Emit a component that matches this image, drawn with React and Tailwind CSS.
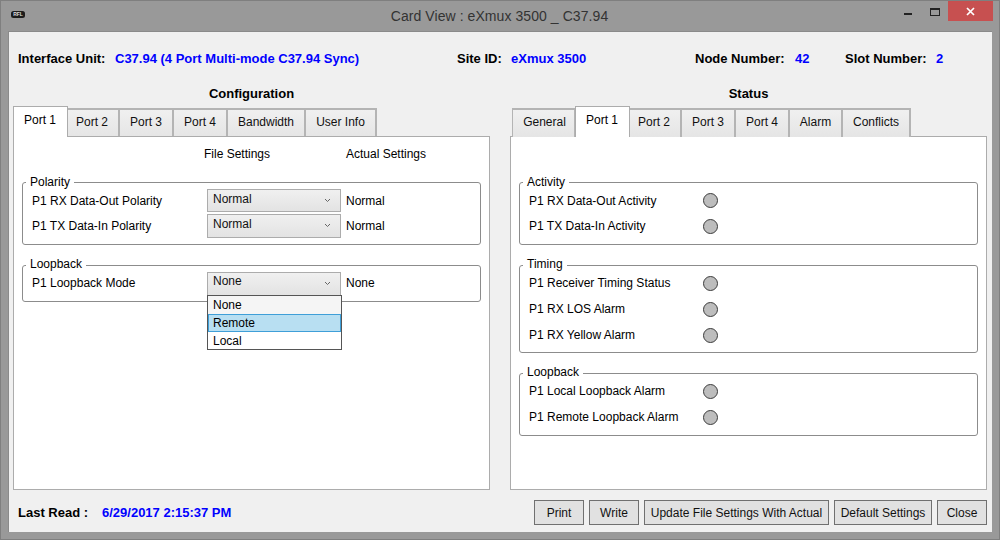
const F = { fontFamily: '"Liberation Sans", Arial, sans-serif' };

function Tab({ label, w, active, extra = "" }) {
  return active ? (
    <div style={{ width: w }} className="relative z-10 -mr-px h-[31px] border border-b-0 border-[#acacac] bg-white flex items-start justify-center pt-[4px] pr-[1px] text-[12px] text-black">
      {label}
    </div>
  ) : (
    <div style={{ width: w }} className={"-mr-px h-[29px] border-2 border-b-0 border-[#b4b4b4] border-l-[1px] bg-gradient-to-b from-[#f0f0f0] to-[#e5e5e5] flex items-center justify-center pb-[4px] text-[12px] text-[#111] " + extra}>
      {label}
    </div>
  );
}

function Tabs({ tabs }) {
  return (
    <div className="flex items-end h-[31px]">
      {tabs.map((t) => (
        <Tab key={t[0]} label={t[0]} w={t[1]} active={t[2]} extra={t[3]} />
      ))}
    </div>
  );
}

function Group({ title, h, mt, children, first }) {
  return (
    <div style={{ height: h, marginTop: mt }} className="relative border border-[#8c8c8c] rounded-[3px] pl-[9px]">
      <span className={first ? "absolute left-[3px] -top-[9px] bg-white px-[4px] text-[12px] leading-[16px] text-black" : "absolute left-[3px] -top-[10px] bg-white px-[4px] text-[12px] leading-[16px] text-black"}>{title}</span>
      {children}
    </div>
  );
}

function Chevron() {
  return (
    <svg width="7" height="5" viewBox="0 0 7 5" className="absolute right-[9px] top-[8px]">
      <path d="M1 1 L3.5 3.5 L6 1" fill="none" stroke="#666" strokeWidth="1" />
    </svg>
  );
}

function Select({ value, h = 24, low }) {
  return (
    <div style={{ height: h }} className={low ? "relative w-[134px] border border-[#acacac] bg-gradient-to-b from-[#f0f0f0] to-[#e3e3e3] pl-[5px] text-[12px] leading-[19px] text-[#111]" : "relative w-[134px] border border-[#acacac] bg-gradient-to-b from-[#f0f0f0] to-[#e3e3e3] pl-[5px] text-[12px] leading-[17px] text-[#111]"}>
      {value}
      <Chevron />
    </div>
  );
}

function CfgRow({ label, value, h, select, low }) {
  const pad = low ? "pt-[1px]" : "pb-[1px]";
  return (
    <div style={{ height: h }} className="flex items-center">
      <span className={"w-[175px] text-[12px] text-black " + pad}>{label}</span>
      <Select value={value} h={select} low={low} />
      <span className={"ml-[5px] text-[12px] text-black " + pad}>{value}</span>
    </div>
  );
}

function Led() {
  return <span className="block w-[15px] h-[15px] rounded-full border border-[#3c3c3c] bg-[#bdbdbd]" />;
}

function StatRow({ label, h = 26, drop }) {
  return (
    <div style={{ height: h }} className="flex items-center">
      <span className={drop ? "w-[174px] text-[12px] text-black pt-[2px]" : "w-[174px] text-[12px] text-black"}>{label}</span>
      <Led />
    </div>
  );
}

function Btn({ label, w }) {
  return (
    <div style={{ width: w }} className="h-[25px] border border-[#707070] bg-[#e1e1e1] flex items-center justify-center text-[12px] text-[#111]">
      {label}
    </div>
  );
}

export default function App() {
  return (
    <div style={F} className="w-[1000px] h-[540px] overflow-hidden bg-[#999999] border border-[#7f7f7f] flex flex-col">
      {/* title bar */}
      <div className="h-[30px] relative flex items-center justify-center shrink-0 pr-[1px]">
        <svg width="14" height="7" viewBox="0 0 14 7" className="absolute left-[10px] top-[10px]">
          <rect x="0" y="0" width="14" height="7" rx="2.5" fill="#1c1c1c" />
          <text x="7" y="5.4" textAnchor="middle" fontSize="5" fontWeight="700" fill="#ddd">RFL</text>
        </svg>
        <span className="text-[14px] tracking-[0.07px] text-[#333] pt-[1px]">Card View : eXmux 3500 _ C37.94</span>
        <div className="absolute right-[6px] top-0 flex items-start">
          <div className="w-[28px] h-[20px] relative">
            <span className="absolute left-[9px] top-[12px] w-[8px] h-[2px] bg-[#222]" />
          </div>
          <div className="w-[17px] h-[20px] relative mr-[8px]">
            <span className="absolute left-[7px] top-[7px] w-[10px] h-[8px] border border-[#222] border-t-2" />
          </div>
          <div className="w-[45px] h-[20px] bg-[#c75050] flex items-center justify-center">
            <svg width="9" height="9" viewBox="0 0 9 9"><path d="M1 1 L8 8 M8 1 L1 8" stroke="#fff" strokeWidth="1.7" /></svg>
          </div>
        </div>
      </div>

      {/* client */}
      <div className="mx-[7px] w-[984px] h-[501px] bg-[#f0f0f0] border border-[#8a8a8a] border-r-0 border-b-0 flex flex-col shrink-0">
        {/* info row */}
        <div className="h-[15px] mt-[19px] flex items-center pl-[9px] text-[13px] font-bold text-black whitespace-nowrap">
          <span className="w-[97px]">Interface Unit:</span>
          <span className="w-[342px] text-[#0000ff]">C37.94 (4 Port Multi-mode C37.94 Sync)</span>
          <span className="w-[54px]">Site ID:</span>
          <span className="w-[184px] text-[#0000ff]">eXmux 3500</span>
          <span className="w-[100px]">Node Number:</span>
          <span className="w-[50px] text-[#0000ff]">42</span>
          <span className="w-[91px]">Slot Number:</span>
          <span className="text-[#0000ff]">2</span>
        </div>

        {/* panels */}
        <div className="mt-[20px] flex pl-[4px]">
          <div className="w-[478px]">
            <div className="h-[15px] pr-[1px] text-center text-[13px] font-bold leading-[15px] text-black">Configuration</div>
            <div className="mt-[5px]">
              <Tabs tabs={[["Port 1", 55, true], ["Port 2", 53, false, "pr-[2px]"], ["Port 3", 55], ["Port 4", 55], ["Bandwidth", 79], ["User Info", 72]]} />
            </div>
            <div className="-mt-px h-[354px] w-[477px] border border-[#acacac] bg-white pl-[8px] pr-[8px] relative">
              <div className="flex h-[33px] pt-[10px] text-[12px] leading-[15px] text-black">
                <span className="ml-[182px] w-[142px]">File Settings</span>
                <span>Actual Settings</span>
              </div>
              <Group title="Polarity" h={63} mt={12} first>
                <div className="pt-[5px]">
                  <CfgRow label="P1 RX Data-Out Polarity" value="Normal" h={25} select={23} low />
                  <CfgRow label="P1 TX Data-In Polarity" value="Normal" h={25} select={24} low />
                </div>
              </Group>
              <Group title="Loopback" h={37} mt={20}>
                <div className="pt-[5px]">
                  <CfgRow label="P1 Loopback Mode" value="None" h={25} select={24} />
                </div>
              </Group>
              {/* dropdown */}
              <div className="absolute left-[193px] top-[158px] w-[135px] h-[55px] border border-[#555] bg-white text-[12px] text-black">
                <div className="h-[18px] bg-[#f5f5f5] pl-[5px] leading-[18px]">None</div>
                <div className="h-[18px] bg-[#b8dff2] border border-[#3f9fd8] pl-[4px] leading-[16px]">Remote</div>
                <div className="h-[18px] pl-[5px] leading-[18px]">Local</div>
              </div>
            </div>
          </div>

          <div className="ml-[19px] w-[477px]">
            <div className="h-[15px] text-center text-[13px] font-bold leading-[15px] text-black">Status</div>
            <div className="mt-[5px] pl-[2px]">
              <Tabs tabs={[["General", 64, false, "pl-[2px]"], ["Port 1", 55, true], ["Port 2", 53, false, "pr-[2px]"], ["Port 3", 55], ["Port 4", 55], ["Alarm", 54], ["Conflicts", 69]]} />
            </div>
            <div className="-mt-px h-[354px] w-[477px] border border-[#acacac] bg-white pl-[8px] pr-[8px]">
              <div className="h-[33px]" />
              <Group title="Activity" h={63} mt={12} first>
                <div className="pt-[4px]">
                  <StatRow label="P1 RX Data-Out Activity" drop />
                  <StatRow label="P1 TX Data-In Activity" />
                </div>
              </Group>
              <Group title="Timing" h={88} mt={20}>
                <div className="pt-[4px]">
                  <StatRow label="P1 Receiver Timing Status" />
                  <StatRow label="P1 RX LOS Alarm" />
                  <StatRow label="P1 RX Yellow Alarm" />
                </div>
              </Group>
              <Group title="Loopback" h={63} mt={20}>
                <div className="pt-[4px]">
                  <StatRow label="P1 Local Loopback Alarm" />
                  <StatRow label="P1 Remote Loopback Alarm" />
                </div>
              </Group>
            </div>
          </div>
        </div>

        {/* footer */}
        <div className="mt-[10px] flex items-center pl-[9px] text-[13px] whitespace-nowrap">
          <span className="w-[84px] font-bold text-black">Last Read :</span>
          <span className="font-bold text-[#0000ff]">6/29/2017 2:15:37 PM</span>
          <div className="ml-auto mr-[5px] flex gap-[5px]">
            <Btn label="Print" w={50} />
            <Btn label="Write" w={50} />
            <Btn label="Update File Settings With Actual" w={185} />
            <Btn label="Default Settings" w={98} />
            <Btn label="Close" w={50} />
          </div>
        </div>
      </div>
    </div>
  );
}
